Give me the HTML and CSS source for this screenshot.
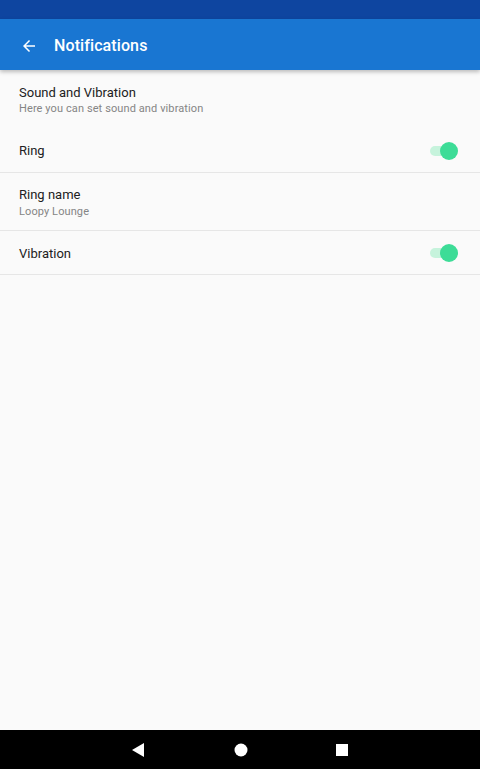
FILE: index.html
```html
<!DOCTYPE html>
<html>
<head>
<meta charset="utf-8">
<link rel="stylesheet" href="styles.css">
</head>
<body>
<div class="screen">
  <div class="statusbar"></div>
  <header class="toolbar">
    <svg class="back" viewBox="0 0 24 24" width="18" height="18"><path d="M20 11H7.83l5.59-5.59L12 4l-8 8 8 8 1.41-1.41L7.83 13H20v-2z" fill="#fff"/></svg>
    <span class="title">Notifications</span>
  </header>
  <main class="list">
    <div class="row header-row">
      <div class="text">
        <div class="primary">Sound and Vibration</div>
        <div class="secondary">Here you can set sound and vibration</div>
      </div>
    </div>
    <div class="row single ring divided">
      <div class="primary">Ring</div>
      <div class="switch"><span class="track"></span><span class="thumb"></span></div>
    </div>
    <div class="row double divided">
      <div class="text">
        <div class="primary">Ring name</div>
        <div class="secondary">Loopy Lounge</div>
      </div>
    </div>
    <div class="row single vib divided">
      <div class="primary">Vibration</div>
      <div class="switch"><span class="track"></span><span class="thumb"></span></div>
    </div>
  </main>
  <nav class="navbar">
    <svg width="14" height="14" viewBox="0 0 14 14"><polygon points="12,0 12,14 0,7" fill="#fff"/></svg>
    <svg width="14" height="14" viewBox="0 0 14 14"><circle cx="7" cy="7" r="6.5" fill="#fff"/></svg>
    <svg width="12" height="12" viewBox="0 0 12 12"><rect x="0" y="0" width="12" height="12" fill="#fff"/></svg>
  </nav>
</div>
</body>
</html>
```
FILE: styles.css
```css
* { box-sizing: border-box; }
html, body { margin: 0; padding: 0; }
body { font-family: Roboto, "Noto Sans", sans-serif; background: #fafafa; }
.screen { width: 480px; height: 769px; display: flex; flex-direction: column; background: #fafafa; }
.statusbar { height: 19px; background: #0e45a0; flex: none; }
.toolbar { height: 51px; background: #1976d2; display: flex; align-items: center; padding: 2px 0 0 20px; flex: none; box-shadow: 0 2px 4px rgba(0,0,0,0.25); position: relative; z-index: 1; }
.back { margin-right: 16px; }
.title { color: #fff; font-size: 16px; font-weight: 500; letter-spacing: 0.1px; }
.list { flex: 1; }
.row { display: flex; align-items: center; padding: 0 20px 0 19px; }
.header-row { height: 60px; padding-top: 2px; }
.single { height: 44px; justify-content: space-between; }
.ring { height: 43px; }
.vib { padding-top: 2px; }
.double { height: 58px; padding-top: 4px; }
.divided { border-bottom: 1px solid #e6e6e6; }
.primary { font-size: 13px; color: #212121; line-height: 16px; }
.secondary { font-size: 11px; color: #858585; line-height: 16px; letter-spacing: 0.1px; }
.double .secondary { line-height: 17px; }
.switch { position: relative; width: 28px; height: 18px; margin-right: 2px; }
.vib .switch { margin-top: -2px; }
.track { position: absolute; left: 0; top: 4px; width: 26px; height: 10px; border-radius: 5px; background: #c6f3dc; }
.thumb { position: absolute; right: 0; top: 0; width: 18px; height: 18px; border-radius: 50%; background: #3ddc97; }
.navbar { height: 39px; background: #000; display: flex; justify-content: center; align-items: center; gap: 88px; flex: none; }
```
